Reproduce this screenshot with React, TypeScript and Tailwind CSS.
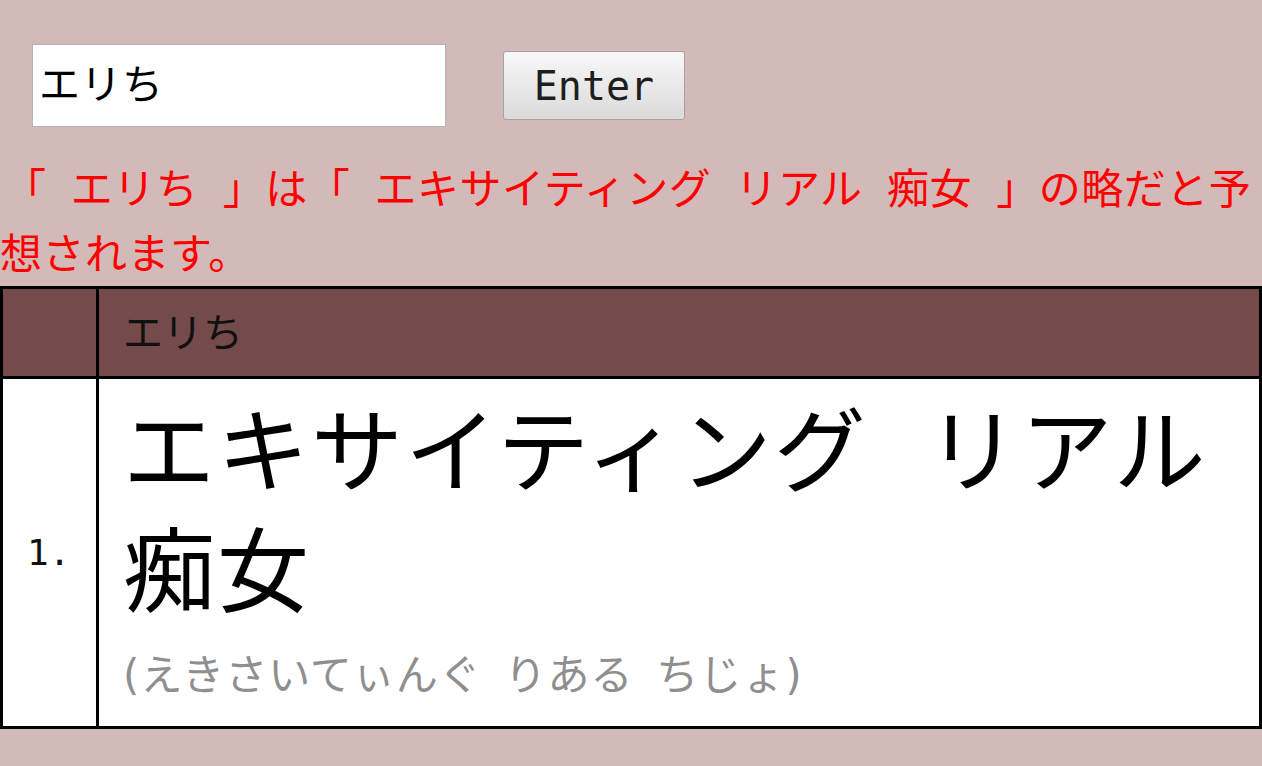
import React from "react";

export default function App() {
  const jp = "font-['DejaVu_Sans','Noto_Sans_CJK_JP',sans-serif]";
  return (
    <div className={`w-full h-[766px] bg-[#d4b9b9] overflow-hidden ${jp}`}>
      <div className="flex items-center pt-[44px] pl-[32px] gap-[57px]">
        <div className="w-[414px] h-[83px] bg-white border border-[#b4b4b4] flex items-center pl-[6px] text-[41px] text-black leading-none tracking-[0.5px]">
          エリち
        </div>
        <button className="w-[182px] h-[69px] rounded-[3px] border border-[#a3a3a3] bg-gradient-to-b from-[#f8f8f8] to-[#dadada] text-[40px] text-[#1e1e1e] font-['DejaVu_Sans_Mono',monospace] leading-none flex items-center justify-center">
          Enter
        </button>
      </div>
      <p className="mt-[30px] text-[42px] leading-[65px] text-[#ff0000] tracking-[0.5px] [word-spacing:0.25em] indent-[4px]">
        「 エリち 」は「 エキサイティング リアル 痴女 」の略だと予想されます。
      </p>
      <div className="border-[3px] border-black grid grid-cols-[96px_1fr] -mt-px">
        <div className="bg-[#744a4a] h-[90px] border-r-[3px] border-black border-b-[3px]" />
        <div className="bg-[#744a4a] h-[90px] border-b-[3px] border-black flex items-center pl-[24px] text-[40px] text-[#111] leading-none">
          エリち
        </div>
        <div className="bg-white border-r-[3px] border-black flex items-center pl-[24px] text-[36px] font-['DejaVu_Sans_Mono',monospace] text-[#111] h-[347px]">
          1.
        </div>
        <div className="bg-white pl-[24px] pt-[15px] h-[347px]">
          <div className="text-[92px] leading-[120px] text-black tracking-[2px] [word-spacing:0.3em]">
            エキサイティング リアル 痴女
          </div>
          <div className="text-[42px] leading-[84px] text-[#8f8f8f] tracking-[1px] [word-spacing:0.2em]">
            (えきさいてぃんぐ りある ちじょ)
          </div>
        </div>
      </div>
    </div>
  );
}
